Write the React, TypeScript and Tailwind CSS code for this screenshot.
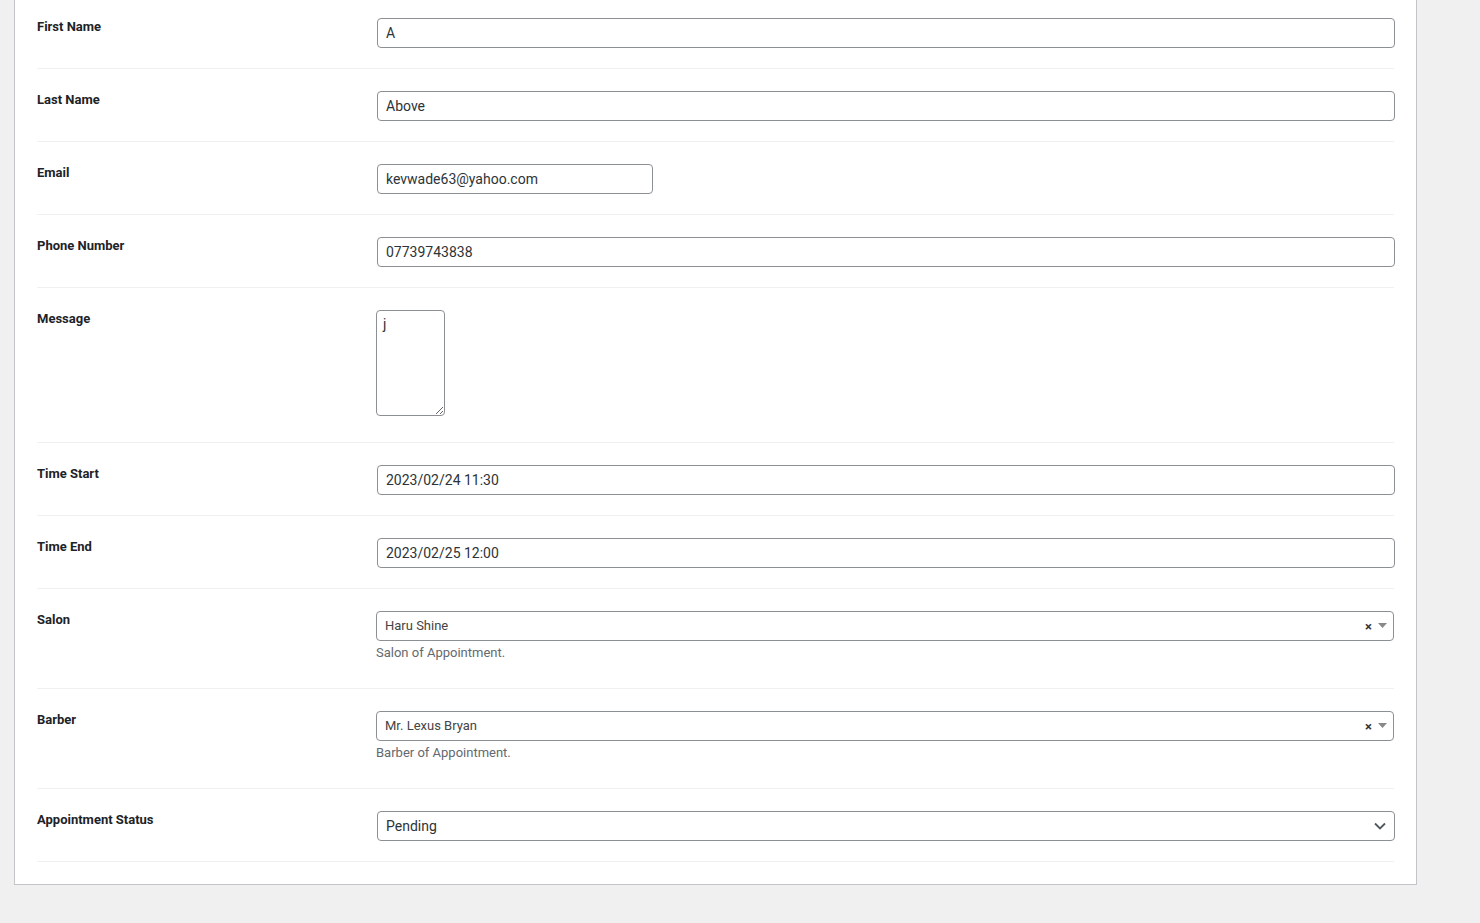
import type { ReactNode } from 'react';

const font = { fontFamily: 'Roboto, "Liberation Sans", sans-serif' };

const inputClass =
  'h-[30px] rounded-[4px] border border-[#8c8f94] bg-white px-2 text-[14px] text-[#2c3338] outline-none';

interface RowProps {
  label: string;
  children: ReactNode;
  first?: boolean;
  tall?: boolean;
}

const Row = ({ label, children, first = false, tall = false }: RowProps) => (
  <div
    className={`flex border-b border-[#f0f0f1] ${first ? 'pt-[18px]' : 'pt-[22px]'} ${tall ? 'pb-[26px]' : 'pb-[20px]'}`}
  >
    <div className="w-[339px] shrink-0 -mt-[1px] text-[13px] font-bold leading-[20px] text-[#1d2327]">{label}</div>
    <div className="flex-1">{children}</div>
  </div>
);

const TextInput = ({ value, narrow = false }: { value: string; narrow?: boolean }) => (
  <input
    readOnly
    value={value}
    className={`${inputClass} ml-px block ${narrow ? 'w-[276px]' : 'w-[1018px]'}`}
    style={font}
  />
);

const Select2 = ({ value, help }: { value: string; help: string }) => (
  <div>
    <div className="flex h-[30px] w-[1018px] items-center rounded-[4px] border border-[#8c8f94] bg-white pl-2 pr-[6px]">
      <span className="flex-1 text-[13px] text-[#444]">{value}</span>
      <span className="mr-[6px] text-[13px] font-bold leading-none text-[#333]">×</span>
      <svg width="9" height="5" viewBox="0 0 9 5" className="mb-px">
        <path d="M0 0h9L4.5 5z" fill="#888" />
      </svg>
    </div>
    <p className="mt-[3px] text-[13px] leading-[18px] text-[#646970]">{help}</p>
  </div>
);

export default function App() {
  return (
    <div className="min-h-[923px] bg-[#f0f0f1] pl-[14px] pr-[63px]" style={font}>
      <div className="border-x border-b border-[#c3c4c7] bg-white px-[22px] pb-[22px]">
        <Row label="First Name" first>
          <TextInput value="A" />
        </Row>
        <Row label="Last Name">
          <TextInput value="Above" />
        </Row>
        <Row label="Email">
          <TextInput value="kevwade63@yahoo.com" narrow />
        </Row>
        <Row label="Phone Number">
          <TextInput value="07739743838" />
        </Row>
        <div className="flex border-b border-[#f0f0f1] pt-[22px] pb-[26px]">
          <div className="w-[339px] shrink-0 -mt-[1px] text-[13px] font-bold leading-[20px] text-[#1d2327]">Message</div>
          <textarea
            readOnly
            value="j"
            className="block h-[106px] w-[69px] resize rounded-[4px] border border-[#8c8f94] px-[6px] py-[2px] text-[14px] leading-[22px] text-[#2c3338] outline-none"
            style={font}
          />
        </div>
        <Row label="Time Start">
          <TextInput value="2023/02/24 11:30" />
        </Row>
        <Row label="Time End">
          <TextInput value="2023/02/25 12:00" />
        </Row>
        <Row label="Salon" tall>
          <Select2 value="Haru Shine" help="Salon of Appointment." />
        </Row>
        <Row label="Barber" tall>
          <Select2 value="Mr. Lexus Bryan" help="Barber of Appointment." />
        </Row>
        <Row label="Appointment Status">
          <div className="ml-px flex h-[30px] w-[1018px] items-center rounded-[4px] border border-[#8c8f94] bg-white pl-2 pr-[8px]">
            <span className="flex-1 text-[14px] text-[#2c3338]">Pending</span>
            <svg width="12" height="8" viewBox="0 0 12 8">
              <path d="M1 1.5l5 5 5-5" fill="none" stroke="#50575e" strokeWidth="1.8" />
            </svg>
          </div>
        </Row>
      </div>
    </div>
  );
}
